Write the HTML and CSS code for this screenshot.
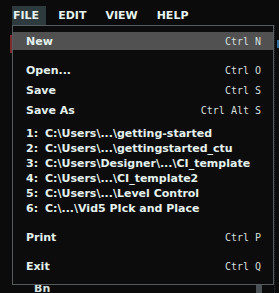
FILE: index.html
```html
<!DOCTYPE html>
<html>
<head>
<meta charset="utf-8">
<link rel="stylesheet" href="styles.css">
</head>
<body>
<nav class="menubar">
  <span class="menu-item active">FILE</span>
  <span class="menu-item">EDIT</span>
  <span class="menu-item">VIEW</span>
  <span class="menu-item">HELP</span>
</nav>
<div class="workspace">
  <div class="marker"></div>
  <div class="canvas"><span class="canvas-label">Bn</span></div>
  <div class="scrollbar"></div>
  <div class="edge"><div class="edge-mark"></div></div>
</div>
<div class="dropdown">
  <div class="row selected"><span class="label">New</span><span class="key">Ctrl N</span></div>
  <div class="group">
    <div class="row"><span class="label">Open...</span><span class="key">Ctrl O</span></div>
    <div class="row"><span class="label">Save</span><span class="key">Ctrl S</span></div>
    <div class="row"><span class="label">Save As</span><span class="key">Ctrl Alt S</span></div>
  </div>
  <div class="recent">
    <div class="recent-row"><span class="num">1:</span><span>C:\Users\...\getting-started</span></div>
    <div class="recent-row"><span class="num">2:</span><span>C:\Users\...\gettingstarted_ctu</span></div>
    <div class="recent-row"><span class="num">3:</span><span>C:\Users\Designer\...\CI_template</span></div>
    <div class="recent-row"><span class="num">4:</span><span>C:\Users\...\CI_template2</span></div>
    <div class="recent-row"><span class="num">5:</span><span>C:\Users\...\Level Control</span></div>
    <div class="recent-row"><span class="num">6:</span><span>C:\...\Vid5 PIck and Place</span></div>
  </div>
  <div class="row print"><span class="label">Print</span><span class="key">Ctrl P</span></div>
  <div class="row exit"><span class="label">Exit</span><span class="key">Ctrl Q</span></div>
</div>
</body>
</html>
```
FILE: styles.css
```css
html, body {
  margin: 0;
  padding: 0;
}
body {
  width: 279px;
  height: 293px;
  overflow: hidden;
  position: relative;
  background: #0b0b0b;
  font-family: "DejaVu Sans", sans-serif;
  color: #e4f1ed;
}
.menubar {
  display: flex;
  gap: 11px;
  padding: 6px 0 0 12px;
  height: 19px;
}
.menu-item {
  padding: 0 7px 0 1px;
  line-height: 19px;
  font-size: 11px;
  font-weight: bold;
  color: #e6f2ee;
}
.menu-item.active {
  background: #2d3a3e;
}
.workspace {
  display: flex;
  height: 268px;
}
.marker {
  margin-left: 10px;
  margin-top: 10px;
  width: 2px;
  height: 18px;
  background: #7c2c2c;
}
.canvas {
  flex: 1;
  margin-left: 22px;
  padding-top: 252px;
}
.canvas-label {
  font-size: 11px;
  font-weight: bold;
  color: #d8e4e0;
}
.scrollbar {
  width: 6px;
  margin-top: 259px;
  margin-right: 11px;
  background: #4a5255;
}
.edge {
  width: 5px;
  border-left: 1px dotted #2a3033;
  margin-left: 1px;
  box-sizing: border-box;
}
.edge-mark {
  margin-top: 15px;
  margin-left: 2px;
  width: 2px;
  height: 8px;
  background: #2a6f9e;
}
.dropdown {
  position: absolute;
  left: 12px;
  top: 25px;
  width: 262px;
  box-sizing: border-box;
  border: 1px solid #555c5e;
  background: #0c0c0c;
  padding: 6px 0 8px 0;
}
.row {
  display: flex;
  justify-content: space-between;
  align-items: center;
  height: 20px;
  padding: 0 12px 0 13px;
}
.row.selected {
  height: 18px;
  background: #515151;
}
.label {
  font-size: 11px;
  font-weight: bold;
  color: #e4f1ed;
}
.key {
  font-family: "DejaVu Sans Mono", monospace;
  font-size: 10px;
  color: #d4dfdb;
}
.group {
  margin-top: 10px;
}
.recent {
  margin-top: 6px;
  padding-left: 13px;
}
.recent-row {
  display: flex;
  height: 15px;
  align-items: center;
  font-size: 11px;
  font-weight: bold;
}
.num {
  width: 19px;
}
.print {
  margin-top: 11px;
}
.exit {
  margin-top: 9px;
}
```
